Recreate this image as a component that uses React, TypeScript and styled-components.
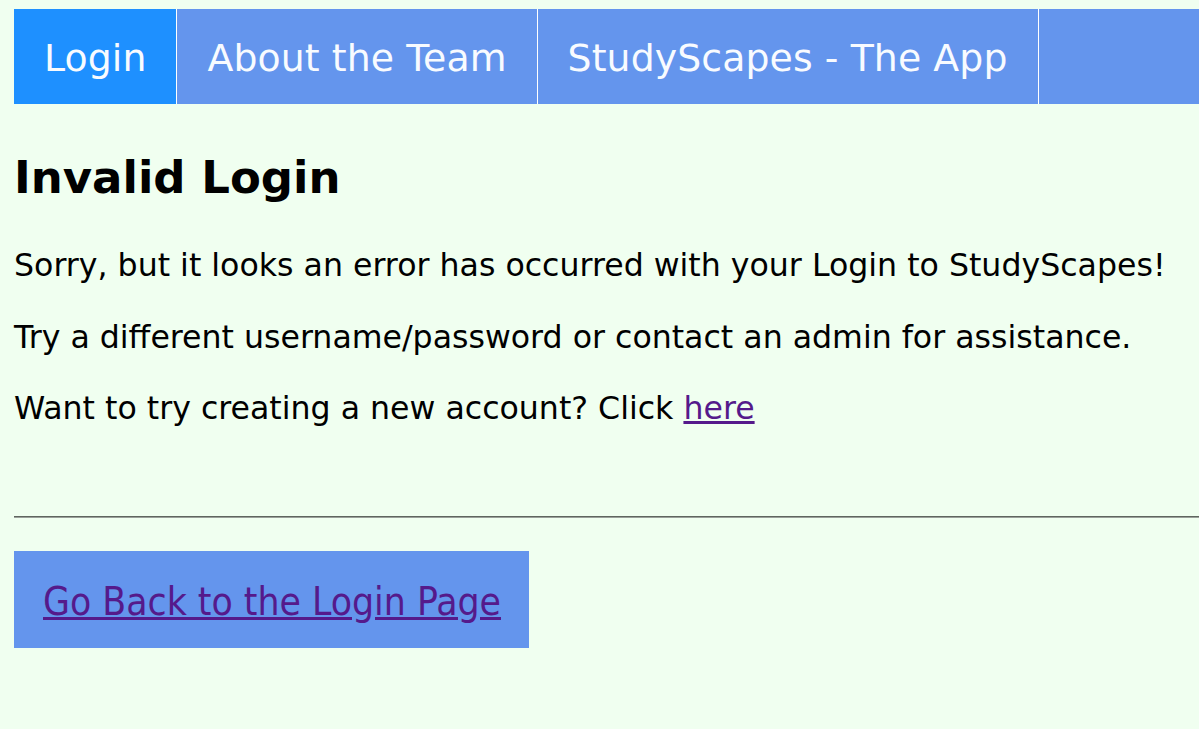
import React from "react";
import styled, { createGlobalStyle } from "styled-components";

const Global = createGlobalStyle`
  html, body {
    margin: 0;
    padding: 0;
    background: #f0fff0;
    overflow: hidden;
  }
  body {
    font-family: "DejaVu Sans", Verdana, sans-serif;
    color: #000;
  }
`;

const Page = styled.div`
  padding: 9px 0 0 14px;
  display: flex;
  flex-direction: column;
`;

const Nav = styled.ul`
  list-style: none;
  margin: 0;
  padding: 0;
  display: flex;
  height: 95px;
  background: #6495ed;
`;

const Tab = styled.li<{ $active?: boolean }>`
  display: flex;
  align-items: center;
  padding: 2px 30px 0 30px;
  border-right: 1px solid #ffffff;
  background: ${(p) => (p.$active ? "#1e90ff" : "#6495ed")};
  color: #f8fbff;
  font-size: 37.8px;
  letter-spacing: 0.1px;
  white-space: nowrap;
`;

const Title = styled.h2`
  margin: 47px 0 0 0;
  font-size: 45px;
  font-weight: bold;
  line-height: normal;
`;

const Body = styled.div`
  margin-top: 43px;
  display: flex;
  flex-direction: column;
  gap: 35.5px;
`;

const Para = styled.p`
  margin: 0;
  font-size: 31.6px;
  white-space: nowrap;
`;

const Link = styled.a`
  color: #551a8b;
  text-decoration: underline;
`;

const Rule = styled.hr`
  margin: 90px 0 0 0;
  border: none;
  border-top: 1px solid #5f665f;
  border-bottom: 1px solid #9aa09a;
  height: 0;
`;

const BackBox = styled.div`
  margin-top: 33px;
  width: 515px;
  height: 97px;
  box-sizing: border-box;
  padding: 0 0 0 29px;
  display: flex;
  align-items: center;
  background: #6495ed;
`;

const BackLink = styled.a`
  color: #551a8b;
  text-decoration: underline;
  font-family: "DejaVu Sans Condensed", "DejaVu Sans", sans-serif;
  font-stretch: condensed;
  font-size: 38.7px;
  padding-top: 3px;
  white-space: nowrap;
`;

export default function App() {
  return (
    <>
      <Global />
      <Page>
        <Nav>
          <Tab $active>Login</Tab>
          <Tab>About the Team</Tab>
          <Tab>StudyScapes - The App</Tab>
        </Nav>
        <Title>Invalid Login</Title>
        <Body>
          <Para>Sorry, but it looks an error has occurred with your Login to StudyScapes!</Para>
          <Para>Try a different username/password or contact an admin for assistance.</Para>
          <Para>
            Want to try creating a new account? Click <Link href="#">here</Link>
          </Para>
        </Body>
        <Rule />
        <BackBox>
          <BackLink href="#">Go Back to the Login Page</BackLink>
        </BackBox>
      </Page>
    </>
  );
}
